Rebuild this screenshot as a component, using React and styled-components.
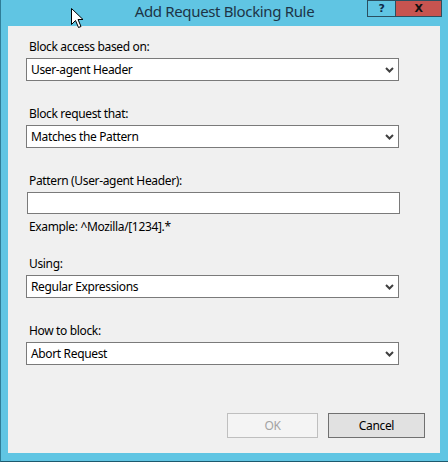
import styled, { createGlobalStyle } from "styled-components"

const Global = createGlobalStyle`
    html, body {
        margin: 0;
        padding: 0;
        background: #60c5e3;
    }
    * {
        box-sizing: border-box;
    }
`

const Janela = styled.div`
    position: relative;
    width: 448px;
    height: 462px;
    background: #60c5e3;
    border-left: 1px solid #2f7d97;
    border-bottom: 1px solid #1d5a6e;
    display: flex;
    flex-direction: column;
    font-family: "Noto Sans", "Open Sans", sans-serif;
    letter-spacing: -0.35px;
    overflow: hidden;
`

const BarraTitulo = styled.div`
    height: 26px;
    display: grid;
    grid-template-columns: 1fr auto 1fr;
    align-items: start;
`

const Titulo = styled.div`
    color: #1d3446;
    font-size: 15px;
    line-height: 22px;
    white-space: nowrap;
`

const Controles = styled.div`
    display: flex;
    justify-content: flex-end;
    padding-right: 6px;
`

const BotaoJanela = styled.div`
    height: 17px;
    width: ${props => props.$largura}px;
    background: ${props => props.$fundo};
    border: 1px solid #2a4f60;
    border-left-width: ${props => props.$semBordaEsq ? 0 : 1}px;
    display: flex;
    align-items: center;
    justify-content: center;
    color: ${props => props.$cor};
    font-family: "DejaVu Sans", sans-serif;
    font-size: 11px;
    font-weight: 700;
    line-height: 1;
`

const AreaCliente = styled.div`
    flex: 1;
    margin: 0 8px 8px 7px;
    background: #f0f0f0;
    display: flex;
    flex-direction: column;
`

const Formulario = styled.div`
    flex: 1;
    padding: 13px 0 0 18px;
    display: flex;
    flex-direction: column;
`

const Campo = styled.div`
    display: flex;
    flex-direction: column;
    margin-bottom: ${props => props.$espaco}px;
`

const Rotulo = styled.label`
    color: #000;
    font-size: 12px;
    line-height: 16px;
    margin: 0 0 3px 3px;
`

const Dica = styled.div`
    color: #000;
    font-size: 12px;
    line-height: 16px;
    margin: 5px 0 0 3px;
`

const Caixa = styled.div`
    width: 373px;
    height: ${props => props.$altura}px;
    background: #fff;
    border: 1px solid #7a7a7a;
    display: flex;
    align-items: center;
    justify-content: space-between;
    padding: 0 4px 0 4px;
    margin-left: ${props => props.$recuo || 0}px;
    font-size: 12px;
    color: #000;
`

const Seta = () => (
    <svg width="9" height="6" viewBox="0 0 9 6">
        <polyline points="1,1 4.5,4.5 8,1" fill="none" stroke="#404040" strokeWidth="2" />
    </svg>
)

const Selecao = ({ valor }) => (
    <Caixa $altura={23}>
        <span>{valor}</span>
        <Seta />
    </Caixa>
)

const Rodape = styled.div`
    display: flex;
    justify-content: flex-end;
    gap: 10px;
    padding: 0 15px 15px 0;
`

const Botao = styled.button`
    width: ${props => props.$largura}px;
    height: 25px;
    font-family: "Noto Sans", "Open Sans", sans-serif;
    font-size: 12px;
    letter-spacing: -0.35px;
    padding: 0;
    border: 1px solid ${props => props.disabled ? "#bfbfbf" : "#707070"};
    background: ${props => props.disabled ? "#f4f4f4" : "#e1e1e1"};
    color: ${props => props.disabled ? "#a3a3a3" : "#000"};
`

const Cursor = styled.svg`
    position: absolute;
    left: 70px;
    top: 8px;
`

export default function App() {
    return (
        <>
            <Global />
            <Janela>
                <BarraTitulo>
                    <div />
                    <Titulo>Add Request Blocking Rule</Titulo>
                    <Controles>
                        <BotaoJanela $largura={29} $fundo="#60c5e3" $cor="#0f2a4a">?</BotaoJanela>
                        <BotaoJanela $largura={46} $fundo="#c75450" $cor="#111" $semBordaEsq>X</BotaoJanela>
                    </Controles>
                </BarraTitulo>
                <AreaCliente>
                    <Formulario>
                        <Campo $espaco={25}>
                            <Rotulo>Block access based on:</Rotulo>
                            <Selecao valor="User-agent Header" />
                        </Campo>
                        <Campo $espaco={25}>
                            <Rotulo>Block request that:</Rotulo>
                            <Selecao valor="Matches the Pattern" />
                        </Campo>
                        <Campo $espaco={21}>
                            <Rotulo>Pattern (User-agent Header):</Rotulo>
                            <Caixa $altura={22} $recuo={1} />
                            <Dica>Example: ^Mozilla/[1234].*</Dica>
                        </Campo>
                        <Campo $espaco={25}>
                            <Rotulo>Using:</Rotulo>
                            <Selecao valor="Regular Expressions" />
                        </Campo>
                        <Campo $espaco={0}>
                            <Rotulo>How to block:</Rotulo>
                            <Selecao valor="Abort Request" />
                        </Campo>
                    </Formulario>
                    <Rodape>
                        <Botao $largura={91} disabled>OK</Botao>
                        <Botao $largura={97}>Cancel</Botao>
                    </Rodape>
                </AreaCliente>
                <Cursor width="13" height="21" viewBox="0 0 13 21">
                    <path d="M0.5 0.5 L0.5 16.5 L4.5 12.5 L7.5 19.5 L10 18.5 L7 11.5 L12 11.5 Z" fill="#fff" stroke="#000" strokeWidth="1" />
                </Cursor>
            </Janela>
        </>
    )
}
